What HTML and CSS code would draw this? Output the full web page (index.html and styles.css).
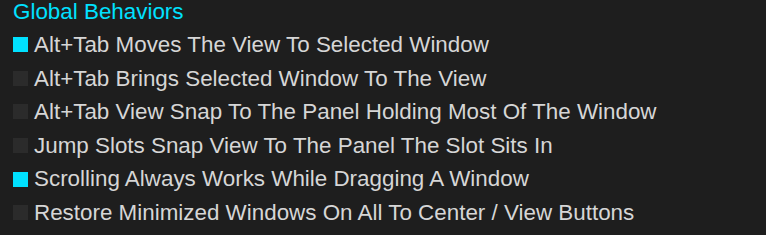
FILE: index.html
```html
<!DOCTYPE html>
<html lang="en">
<head>
    <meta charset="UTF-8">
    <title>Global Behaviors</title>
    <link rel="stylesheet" href="styles.css">
</head>
<body>
    <section class="settings-group">
        <h2 class="group-title">Global Behaviors</h2>
        <ul class="option-list">
            <li class="option checked"><span class="box"></span>Alt+Tab Moves The View To Selected Window</li>
            <li class="option"><span class="box"></span>Alt+Tab Brings Selected Window To The View</li>
            <li class="option"><span class="box"></span>Alt+Tab View Snap To The Panel Holding Most Of The Window</li>
            <li class="option"><span class="box"></span>Jump Slots Snap View To The Panel The Slot Sits In</li>
            <li class="option checked"><span class="box"></span>Scrolling Always Works While Dragging A Window</li>
            <li class="option"><span class="box"></span>Restore Minimized Windows On All To Center / View Buttons</li>
        </ul>
    </section>
</body>
</html>
```

FILE: styles.css
```css
:root {
    --background-color: #1e1e1e;
    --text-color: #d6d6d6;
    --accent-color: #00e1ff;
    --box-color: #2b2b2b;
}

* {
    margin: 0;
    padding: 0;
    box-sizing: border-box;
}

body {
    font-family: "Liberation Sans", Arial, sans-serif;
    background-color: var(--background-color);
    color: var(--text-color);
    min-height: 100vh;
}

.settings-group {
    padding: 0 13px;
}

.group-title {
    font-size: 22.4px;
    font-weight: normal;
    color: var(--accent-color);
    line-height: 24px;
    margin-bottom: 4px;
}

.option-list {
    list-style: none;
}

.option {
    display: flex;
    align-items: center;
    gap: 6px;
    font-size: 22.4px;
    line-height: 33.6px;
    height: 33.6px;
}

.box {
    width: 15px;
    height: 15px;
    background-color: var(--box-color);
    flex-shrink: 0;
}

.option.checked .box {
    background-color: var(--accent-color);
}
```
